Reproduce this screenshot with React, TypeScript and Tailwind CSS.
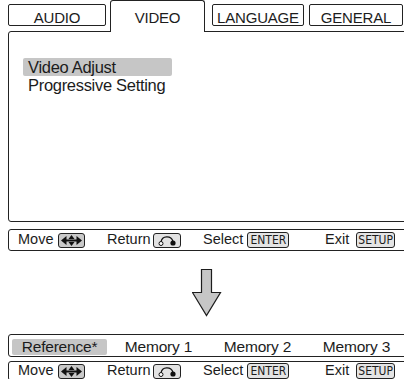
import React from 'react';

const tabs = ['AUDIO', 'VIDEO', 'LANGUAGE', 'GENERAL'];

function MoveKey() {
  return (
    <svg width="27" height="15" viewBox="0 0 27 15" className="block">
      <rect x="0.5" y="0.5" width="26" height="14" rx="2.5" fill="#c9c9c9" stroke="#222" />
      <polygon points="3,7.5 8.5,3 8.5,12" fill="#111" />
      <polygon points="24,7.5 18.5,3 18.5,12" fill="#111" />
      <rect x="8" y="6.5" width="11" height="2" fill="#111" />
      <polygon points="13.5,2 10.5,6 16.5,6" fill="#111" />
      <polygon points="13.5,13 10.5,9 16.5,9" fill="#111" />
    </svg>
  );
}

function ReturnKey() {
  return (
    <svg width="28" height="15" viewBox="0 0 28 15" className="block">
      <rect x="0.5" y="0.5" width="27" height="14" rx="2.5" fill="#e2e2e2" stroke="#222" />
      <path d="M8 9 C9 2.5 18 2 20 8.5" fill="none" stroke="#111" strokeWidth="1.2" />
      <circle cx="8" cy="10.5" r="2" fill="#fff" stroke="#111" strokeWidth="1" />
      <circle cx="20" cy="10" r="2.6" fill="#111" />
    </svg>
  );
}

function KeyLabel({ label, w }: { label: string; w: string }) {
  return (
    <span
      className={`${w} flex h-[16px] items-center justify-center rounded-[3px] border border-[#222] bg-[#e4e4e4] font-['Liberation_Sans_Narrow','DejaVu_Sans_Condensed',Arial,sans-serif] text-[12px] leading-none`}
    >
      {label}
    </span>
  );
}

function StatusBar({ h }: { h: string }) {
  return (
    <div className={`${h} flex w-[400px] items-center rounded-[3px] border border-[#222] pl-[9px] text-[14.5px]`}>
      <div className="flex w-[89px] items-center gap-[5px]">
        <span>Move</span>
        <MoveKey />
      </div>
      <div className="flex w-[96px] items-center gap-[2px]">
        <span>Return</span>
        <ReturnKey />
      </div>
      <div className="flex w-[122px] items-center gap-[4px]">
        <span>Select</span>
        <KeyLabel label="ENTER" w="w-[42px]" />
      </div>
      <div className="flex items-center gap-[7px]">
        <span>Exit</span>
        <KeyLabel label="SETUP" w="w-[39px]" />
      </div>
    </div>
  );
}

export default function App() {
  return (
    <div className="h-[379px] w-[404px] overflow-hidden bg-white pl-[8px] font-['Liberation_Sans',Arial,sans-serif] text-[#1c1c1c]">
      {/* tab strip */}
      <div className="flex h-[31px] items-start text-[15px] leading-[15px] tracking-[-0.2px]">
        <div className="mt-[4px] h-[22px] w-[98px] rounded-[2px] border border-[#222] pt-[5px] text-center">
          {tabs[0]}
        </div>
        <div className="relative z-10 ml-[4px] h-[32px] w-[95px] rounded-t-[3px] border border-b-0 border-[#222] bg-white pt-[9px] text-center">
          {tabs[1]}
        </div>
        <div className="ml-[7px] mt-[4px] h-[22px] w-[92px] rounded-[2px] border border-[#222] pt-[5px] text-center">
          {tabs[2]}
        </div>
        <div className="ml-[5px] mt-[4px] h-[22px] w-[94px] rounded-[2px] border border-[#222] pt-[5px] text-center">
          {tabs[3]}
        </div>
      </div>

      {/* menu panel */}
      <div className="h-[191px] w-[400px] rounded-[3px] border border-[#222] pl-[14px] pt-[26px] text-[16.5px] tracking-[-0.3px]">
        <div className="h-[18px] w-[149px] rounded-[2px] bg-[#c6c6c6] pl-[5px] pt-[1px] leading-[16px]">Video Adjust</div>
        <div className="pl-[5px] leading-[19px]">Progressive Setting</div>
      </div>

      <div className="mt-[7px]">
        <StatusBar h="h-[22px]" />
      </div>

      {/* down arrow */}
      <svg width="30" height="48" viewBox="0 0 30 48" className="ml-[184px] mt-[18px] block">
        <polygon
          points="9.5,0.5 19.5,0.5 19.5,23.5 28.5,23.5 14.5,46.5 0.5,23.5 9.5,23.5"
          fill="#c6c6c6"
          stroke="#1c1c1c"
          strokeWidth="1.2"
        />
      </svg>

      {/* memory selector */}
      <div className="mt-[17px] grid h-[23px] w-[400px] grid-cols-[repeat(4,99px)] items-center rounded-[3px] border border-[#222] pl-[1px] text-[15.5px] tracking-[-0.2px]">
        <div className="mx-[2px] flex h-[16px] items-center justify-center rounded-[2px] bg-[#c6c6c6]">Reference*</div>
        <div className="text-center">Memory 1</div>
        <div className="text-center">Memory 2</div>
        <div className="text-center">Memory 3</div>
      </div>

      <div className="mt-[4px]">
        <StatusBar h="h-[20px]" />
      </div>
    </div>
  );
}
